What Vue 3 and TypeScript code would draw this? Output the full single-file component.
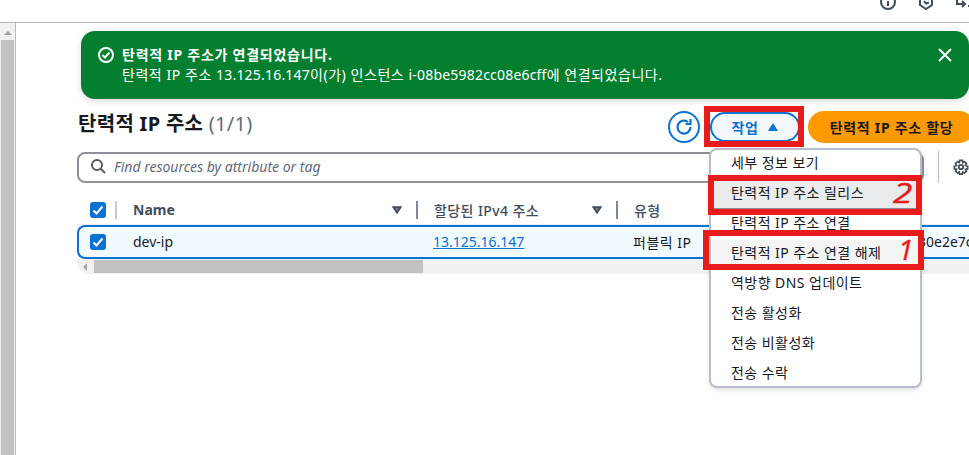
<script setup lang="ts">
const menuItems = [
  { label: '세부 정보 보기', cls: '' },
  { label: '탄력적 IP 주소 릴리스', cls: 'active' },
  { label: '탄력적 IP 주소 연결', cls: '' },
  { label: '탄력적 IP 주소 연결 해제', cls: 'hover' },
  { label: '역방향 DNS 업데이트', cls: '' },
  { label: '전송 활성화', cls: '' },
  { label: '전송 비활성화', cls: '' },
  { label: '전송 수락', cls: '' },
]
</script>

<template>
  <div class="page">
    <header class="topbar">
      <svg class="top-icon" width="18" height="18" viewBox="0 0 18 18"><circle cx="9" cy="9" r="7" fill="none" stroke="#414d5c" stroke-width="2"/><path d="M9 8v5" stroke="#414d5c" stroke-width="2"/></svg>
      <svg class="top-icon" width="18" height="18" viewBox="0 0 18 18"><path d="M3 3h12v9l-6 4-6-4z" fill="none" stroke="#414d5c" stroke-width="2"/><path d="M7 8l2 2.500 3-1" fill="none" stroke="#414d5c" stroke-width="2"/></svg>
      <svg class="top-icon" width="18" height="18" viewBox="0 0 18 18"><path d="M2 4v7h8M7 8l3 3-3 3" fill="none" stroke="#414d5c" stroke-width="2"/><path d="M13 13h2" stroke="#414d5c" stroke-width="2"/></svg>
    </header>
    <div class="body">
      <aside class="vscroll">
        <span class="vscroll-arrow"></span>
        <span class="vscroll-thumb"></span>
      </aside>
      <main class="main">
        <section class="flash">
          <svg class="flash-icon" width="18" height="18" viewBox="0 0 18 18"><circle cx="9" cy="9" r="7" fill="none" stroke="#fff" stroke-width="2"/><path d="M5.500 9l2.500 2.500 4.500-5" fill="none" stroke="#fff" stroke-width="2"/></svg>
          <div class="flash-text">
            <div class="flash-title">탄력적 IP 주소가 연결되었습니다.</div>
            <div class="flash-line">탄력적 IP 주소 <span class="latin">13.125.16.147</span>이(가) 인스턴스 <span class="latin">i-08be5982cc08e6cff</span>에 연결되었습니다.</div>
          </div>
          <svg class="flash-close" width="16" height="16" viewBox="0 0 16 16"><path d="M2 2l12 12M14 2L2 14" stroke="#fff" stroke-width="2"/></svg>
        </section>

        <section class="head">
          <h1>탄력적 IP 주소 <span>(1/1)</span></h1>
          <button class="refresh">
            <svg width="20" height="20" viewBox="0 0 20 20"><path d="M16.500 10a6.500 6.500 0 1 1-2.400-5" fill="none" stroke="#0972d3" stroke-width="2.200"/><path d="M16.500 2v5h-5" fill="none" stroke="#0972d3" stroke-width="2.200"/></svg>
          </button>
          <button class="actions">작업 <span class="tri"></span></button>
          <button class="primary">탄력적 IP 주소 할당</button>
        </section>

        <section class="filter">
          <div class="search">
            <svg width="16" height="16" viewBox="0 0 16 16"><circle cx="7" cy="7" r="5" fill="none" stroke="#545b64" stroke-width="2"/><path d="M10.500 10.500L15 15" stroke="#545b64" stroke-width="2"/></svg>
            <span>Find resources by attribute or tag</span>
          </div>
          <i class="filter-sep"></i>
          <svg class="gear" width="16" height="16" viewBox="0 0 18 18"><circle cx="9" cy="9" r="2.500" fill="none" stroke="#414d5c" stroke-width="2"/><path d="M7.500 1.500h3l.5 2.500 2-.9 2.200 2.200-1.200 2 2.500.7v3l-2.500.6 1.200 2-2.200 2.200-2-1.100-.5 2.300h-3l-.5-2.300-2 1.100-2.200-2.200 1.200-2-2.500-.6v-3l2.500-.7-1.200-2 2.200-2.200 2 .9z" fill="none" stroke="#414d5c" stroke-width="1.900"/></svg>
        </section>

        <section class="table">
          <div class="thead">
            <span class="cb"><svg width="16" height="16" viewBox="0 0 16 16"><path d="M3.500 8.500l3 3 6-7" fill="none" stroke="#fff" stroke-width="2"/></svg></span>
            <i class="sep first"></i>
            <span class="col-name th">Name</span>
            <svg class="sort" width="10" height="8" viewBox="0 0 10 8"><path d="M1.500 1.200h7L5 6.500z" fill="#8d9096" stroke="#414d5c" stroke-width="2"/></svg>
            <i class="sep"></i>
            <span class="col-ip th">할당된 IPv4 주소</span>
            <svg class="sort" width="10" height="8" viewBox="0 0 10 8"><path d="M1.500 1.200h7L5 6.500z" fill="#8d9096" stroke="#414d5c" stroke-width="2"/></svg>
            <i class="sep"></i>
            <span class="col-type th">유형</span>
          </div>
          <div class="trow">
            <span class="cb"><svg width="16" height="16" viewBox="0 0 16 16"><path d="M3.500 8.500l3 3 6-7" fill="none" stroke="#fff" stroke-width="2"/></svg></span>
            <span class="name-val">dev-ip</span>
            <a class="ip-val">13.125.16.147</a>
            <span class="type-val">퍼블릭 IP</span>
            <span class="clip-val">30e2e7c</span>
          </div>
          <div class="hscroll">
            <span class="arrow-l"></span>
            <span class="hthumb"></span>
            <span class="arrow-r"></span>
          </div>
        </section>

        <ul class="menu">
          <li v-for="item in menuItems" :key="item.label" :class="item.cls">{{ item.label }}</li>
        </ul>
        <i class="mark mark-action"></i>
        <i class="mark mark-release"></i>
        <i class="mark mark-detach"></i>
        <b class="digit digit-2">2</b>
        <b class="digit digit-1">1</b>
      </main>
    </div>
  </div>
</template>

<style>
html, body { margin: 0; padding: 0; background: #fff; overflow: hidden; }
</style>

<style scoped>
.page {
  width: 969px;
  height: 455px;
  overflow: hidden;
  display: flex;
  flex-direction: column;
  font-family: "Noto Sans", "Noto Sans CJK KR", sans-serif;
  font-size: 14px;
  color: #16191f;
}
.topbar {
  height: 22px;
  flex: none;
  border-bottom: 1px solid #b9b9bd;
  display: flex;
  align-items: flex-end;
  gap: 20px;
  padding-left: 879px;
  overflow: hidden;
  box-sizing: content-box;
}
.top-icon { flex: none; margin-bottom: 11px; }
.body { flex: 1; display: flex; min-height: 0; }
.vscroll {
  width: 15px;
  flex: none;
  border-right: 1px solid #b9b9bd;
  background: #f1f1f1;
  display: flex;
  flex-direction: column;
  align-items: center;
}
.vscroll-arrow {
  margin-top: 8px;
  border-left: 4px solid transparent;
  border-right: 4px solid transparent;
  border-bottom: 4px solid #a3a3a3;
}
.vscroll-thumb { margin-top: 5px; width: 13px; flex: 1; background: #c1c1c1; }
.main {
  position: relative;
  flex: 1;
  min-width: 0;
  padding: 8px 0 0 61px;
}
.flash {
  width: 888px;
  height: 68px;
  margin-left: 4px;
  box-sizing: border-box;
  background: #037f2f;
  border-radius: 14px;
  color: #fff;
  box-shadow: 0 2px 6px rgba(0, 7, 22, .15);
  display: flex;
  padding: 14px 16px 0 16px;
  line-height: 20px;
}
.flash-icon { flex: none; margin: 1px 7px 0 0; }
.flash-text { flex: 1; letter-spacing: .55px; white-space: nowrap; }
.flash-title { font-weight: 700; letter-spacing: .75px; }
.flash-line .latin { letter-spacing: .2px; }
.flash-close { flex: none; margin: 2px 0 0 0; }
.head {
  display: flex;
  align-items: center;
  width: 898px;
  height: 32px;
  margin-top: 12px;
}
.head h1 {
  margin: 0 0 6px 1px;
  flex: 1;
  font-size: 20px;
  line-height: 26px;
  font-weight: 700;
  letter-spacing: .3px;
}
.head h1 span { font-weight: 400; color: #5f6b7a; }
.refresh {
  width: 32px;
  height: 32px;
  padding: 0;
  border: 2px solid #0972d3;
  border-radius: 50%;
  background: #fff;
  display: flex;
  align-items: center;
  justify-content: center;
}
.actions {
  width: 90px;
  height: 30px;
  margin-left: 10px;
  padding: 0;
  border: 2px solid #0972d3;
  border-radius: 16px;
  background: #f2f8fd;
  color: #0972d3;
  font: 700 14px "Noto Sans", "Noto Sans CJK KR", sans-serif;
  letter-spacing: .5px;
  display: flex;
  align-items: center;
  justify-content: center;
  gap: 10px;
}
.tri {
  border-left: 5px solid transparent;
  border-right: 5px solid transparent;
  border-bottom: 8px solid #0972d3;
}
.primary {
  width: 167px;
  flex: none;
  height: 32px;
  margin-left: 8px;
  padding: 0;
  border: 0;
  border-radius: 16px;
  background: #ff9900;
  color: #16191f;
  font: 700 14px "Noto Sans", "Noto Sans CJK KR", sans-serif;
  letter-spacing: .7px;
  white-space: nowrap;
}
.filter {
  display: flex;
  align-items: center;
  height: 32px;
  margin-top: 8px;
}
.search {
  width: 847px;
  height: 31px;
  box-sizing: border-box;
  border: 2px solid #8d9096;
  border-radius: 8px;
  display: flex;
  align-items: center;
  gap: 8px;
  padding: 0 0 2px 11px;
  font-style: italic;
  color: #5f6b7a;
  flex: none;
}
.filter-sep { flex: none; width: 1px; height: 32px; background: #b9bdc2; margin-left: 14px; }
.gear { flex: none; margin-left: 14px; }
.table { margin-top: 13px; width: 908px; overflow: hidden; }
.thead {
  height: 29px;
  box-sizing: border-box;
  display: flex;
  align-items: center;
  padding-left: 13px;
  border-bottom: 1px solid #e9ebed;
  padding-bottom: 1px;
  color: #414d5c;
  font-weight: 700;
}
.cb {
  flex: none;
  width: 16px;
  height: 16px;
  border-radius: 3px;
  background: #0972d3;
  display: block;
}
.cb svg { display: block; }
.sep { flex: none; width: 2px; height: 18px; background: #7d8998; margin-left: 14px; }
.sep.first { margin-left: 9px; margin-right: 16px; background: #c6cad0; }
.th { flex: none; }
.col-name { width: 259px; }
.col-ip { width: 158px; margin-left: 16px; font-weight: 500; letter-spacing: .4px; }
.col-type { margin-left: 16px; font-weight: 500; letter-spacing: .4px; }
.sort { flex: none; display: block; }
.trow {
  height: 34px;
  box-sizing: border-box;
  border: 2px solid #0972d3;
  border-right: 0;
  border-radius: 8px 0 0 8px;
  background: #f1faff;
  display: flex;
  align-items: center;
  padding: 0 0 1px 11px;
  position: relative;
}
.name-val { flex: none; width: 300px; margin-left: 27px; }
.ip-val { flex: none; width: 200px; color: #0972d3; text-decoration: underline; }
.type-val { flex: none; letter-spacing: .5px; }
.clip-val { position: absolute; left: 839px; white-space: nowrap; }
.hscroll {
  height: 15px;
  background: #f1f1f1;
  border-radius: 0 0 12px 12px;
  display: flex;
  align-items: center;
  position: relative;
}
.arrow-l {
  position: absolute;
  left: 6px;
  border-top: 4px solid transparent;
  border-bottom: 4px solid transparent;
  border-right: 4px solid #a3a3a3;
}
.arrow-r {
  position: absolute;
  right: 0;
  border-top: 4px solid transparent;
  border-bottom: 4px solid transparent;
  border-left: 4px solid #505050;
}
.hthumb { margin-left: 17px; width: 329px; height: 13px; background: #c1c1c1; }
.menu {
  position: absolute;
  left: 693px;
  top: 125px;
  width: 213px;
  height: 240px;
  box-sizing: border-box;
  margin: 0;
  padding: 0;
  list-style: none;
  background: #fff;
  border: 2px solid #b6bec9;
  border-radius: 8px;
  box-shadow: 0 2px 4px rgba(0, 7, 22, .12);
  z-index: 2;
}
.menu li {
  height: 30px;
  line-height: 25px;
  padding-left: 20px;
  color: #16191f;
  white-space: nowrap;
  letter-spacing: .45px;
}
.menu li.active { background: #e9ebed; border-bottom: 2px solid #8d9096; box-sizing: border-box; }
.menu li.hover { background: #f4f4f4; }
.mark {
  position: absolute;
  display: block;
  box-sizing: border-box;
  border: 6px solid #e71c1c;
  z-index: 3;
}
.mark-action { left: 688px; top: 83px; width: 100px; height: 41px; }
.mark-release { left: 692px; top: 152px; width: 214px; height: 40px; }
.mark-detach { left: 687px; top: 207px; width: 221px; height: 40px; }
.digit {
  position: absolute;
  z-index: 4;
  color: #e71c1c;
  font-family: "Open Sans", sans-serif;
  font-weight: 400;
  font-style: italic;
  line-height: 1;
  -webkit-text-stroke: .5px #e71c1c;
}
.digit-2 { left: 877px; top: 155px; font-size: 28px; transform: scaleX(1.25); transform-origin: left center; }
.digit-1 { left: 882px; top: 212px; font-size: 28px; }
</style>
